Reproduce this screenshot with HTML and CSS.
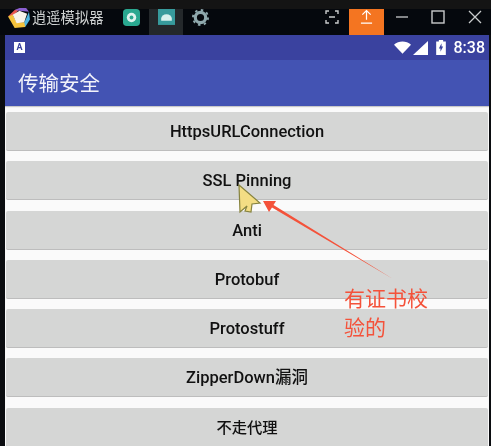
FILE: index.html
```html
<!DOCTYPE html>
<html lang="zh">
<head>
<meta charset="utf-8">
<title>传输安全</title>
<link rel="stylesheet" href="styles.css">
</head>
<body>
<div class="topline"></div>
<header class="titlebar">
  <svg class="logo" viewBox="0 0 24 22"><path fill="#e8554e" d="M1 9 8 2l5-1-6 7z"/><path fill="#8a5fd0" d="M8 2 13 0h7l3 4-10-1z"/><path fill="#4fb4e0" d="M23 4l1 8-5 8-2-3 3-6z"/><path fill="#f4c23c" d="M19 20 8 21 1 9l5-2 4 8h8z"/><path fill="#f7f2ea" d="M6 7l7-4 8 3-3 9-8 1z"/></svg>
  <span class="brand">逍遥模拟器</span>
  <span class="tab"><svg class="tabicon" viewBox="0 0 18 18"><rect width="18" height="18" rx="4" fill="#2aa890"/><circle cx="9" cy="9" r="5" fill="#dff3ee"/><circle cx="9" cy="9" r="2" fill="#2aa890"/></svg></span>
  <span class="tab active"><svg class="tabicon" viewBox="0 0 16 16"><rect width="16" height="15" fill="#379a9c"/><path fill="#d8f0ee" d="M3 9a5 4 0 0 1 10 0v2H3z"/></svg></span>
  <span class="tab"><svg class="tabicon" viewBox="0 0 18 18"><circle cx="9" cy="9" r="5.500" fill="none" stroke="#8fa8ac" stroke-width="3.400"/><circle cx="9" cy="9" r="8" fill="none" stroke="#8fa8ac" stroke-width="2" stroke-dasharray="2.600 3.700"/></svg></span>
  <span class="spacer"></span>
  <svg class="winicon" viewBox="0 0 14 14"><path fill="none" stroke="#c9cbcc" stroke-width="1.400" d="M1 4V1h3M10 1h3v3M13 10v3h-3M4 13H1v-3M4 7h6"/></svg>
  <span class="upload"><svg viewBox="0 0 14 16"><path fill="none" stroke="#fff" stroke-width="1.300" d="M7 11V1M2.500 5.500 7 1l4.500 4.500M1 14.500h12"/></svg></span>
  <svg class="winicon minimize" viewBox="0 0 14 14"><path stroke="#c9cbcc" stroke-width="1.300" d="M1 7h12"/></svg>
  <svg class="winicon maximize" viewBox="0 0 14 14"><rect x="1" y="1" width="12" height="12" fill="none" stroke="#c9cbcc" stroke-width="1.400"/></svg>
  <svg class="winicon" viewBox="0 0 14 14"><path stroke="#c9cbcc" stroke-width="1.300" d="m1 1 12 12M13 1 1 13"/></svg>
</header>
<main class="phone">
  <div class="status">
    <span class="notice">A</span>
    <span class="spacer"></span>
    <svg class="wifi" viewBox="0 0 18 13"><path fill="#fff" d="M0 3.500C5-1 13-1 18 3.500L9 13z"/></svg>
    <svg class="signal" viewBox="0 0 14 13"><path fill="#fff" d="M14 0v13H0z"/></svg>
    <svg class="battery" viewBox="0 0 9 14"><path fill="#fff" d="M2.500 0h4v1.500H9V14H0V1.500h2.500z"/><path fill="#3a429f" d="M5 3 2.500 8H4v3l2.500-5H5z"/></svg>
    <span class="clock">8:38</span>
  </div>
  <div class="appbar">传输安全</div>
  <div class="list">
    <div class="btn">HttpsURLConnection</div>
    <div class="btn">SSL Pinning</div>
    <div class="btn">Anti</div>
    <div class="btn">Protobuf</div>
    <div class="btn">Protostuff</div>
    <div class="btn">ZipperDown漏洞</div>
    <div class="btn btn-cjk">不走代理</div>
  </div>
</main>
<svg class="annot" viewBox="0 0 491 446">
  <path fill="#f4523a" d="M263 201 276 201 273.500 205 393 279 272 207.500 269 212z"/>
  <path fill="#f3dd84" stroke="#86833f" stroke-width="1.200" d="M239 185 260 203 252 204 251 212 245 211 247 206 240 212z"/>
</svg>
<div class="note">有证书校<br>验的</div>
</body>
</html>
```
FILE: styles.css
```css
html, body { margin: 0; padding: 0; }
body {
  width: 491px; height: 446px; overflow: hidden; position: relative;
  background: #0b0d10;
  font-family: "Roboto", "Noto Sans CJK SC", sans-serif;
  filter: blur(0.4px);
}
.topline { height: 9px; background: #141414; }
.titlebar {
  height: 26px; display: flex; align-items: flex-start; background: #05080d;
  color: #d5d8d8; padding-left: 7px; padding-right: 9px;
}
.logo { width: 23px; height: 21px; flex: none; margin-top: -1px; }
.brand { margin-left: 2px; font-size: 14.3px; line-height: 18px; width: 82px; white-space: nowrap; color: #cfd2d2; }
.tab { width: 34px; height: 26px; display: flex; align-items: flex-start; justify-content: center; }
.tab.active { background: #24282b; margin-left: 1px; }
.tabicon { width: 17px; height: 17px; }
.spacer { flex: 1; }
.winicon { width: 14px; height: 14px; flex: none; margin-top: 1px; }
.minimize { margin-right: 22px; }
.maximize { margin-right: 23px; }
.upload { width: 35px; height: 26px; background: #f47521; display: flex; align-items: flex-start; justify-content: center; margin: 0 11px 0 10px; }
.upload svg { width: 13px; height: 16px; }
.phone { margin: 0 2px 0 5px; background: #fafafa; height: 411px; overflow: hidden; }
.status { height: 25px; background: #3a429f; display: flex; align-items: center; padding: 0 4px 0 9px; color: #fff; }
.notice { width: 11px; height: 11px; background: #fff; color: #3a429f; font-size: 9px; font-weight: 700; line-height: 11px; text-align: center; }
.wifi { width: 17px; height: 13px; }
.signal { width: 15px; height: 14px; margin: 0 8px 0 2px; }
.battery { width: 10px; height: 15px; margin-right: 8px; }
.clock { font-size: 16px; font-weight: 500; }
.appbar { height: 46px; background: #4353b3; color: #f2f3fa; font-size: 20.5px; line-height: 48px; padding-left: 13px; box-shadow: 0 1px 1px rgba(0,0,0,.2); }
.list { display: flex; flex-direction: column; gap: 10.25px; padding: 6px 1px 0 1px; }
.btn {
  height: 38px; flex: none; background: #d5d6d5; color: #111;
  font-size: 16.5px; font-weight: 500; line-height: 40px; text-align: center;
  border-bottom: 1px solid #bdbdbd; border-radius: 2px;
}
.btn-cjk { font-size: 15.3px; }
.annot { position: absolute; left: 0; top: 0; width: 491px; height: 446px; pointer-events: none; }
.note { position: absolute; left: 344px; top: 285px; font-size: 21px; line-height: 29px; color: #f4523a; }
```
